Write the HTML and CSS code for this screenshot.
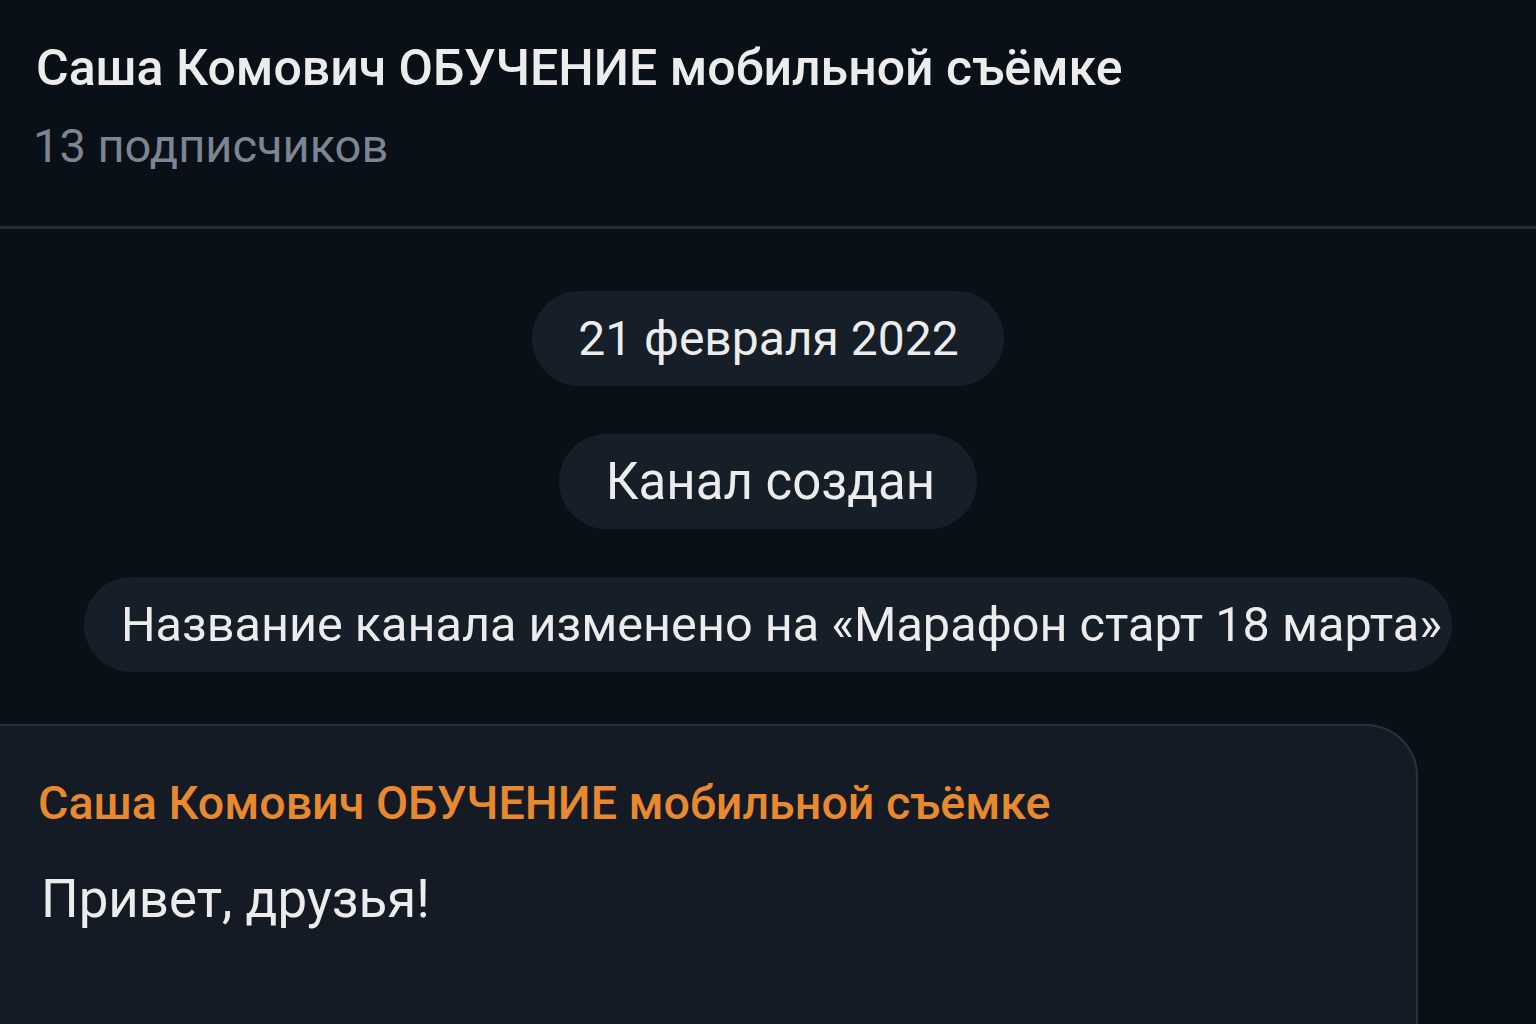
FILE: index.html
```html
<!DOCTYPE html>
<html lang="ru">
<head>
<meta charset="utf-8">
<title>Канал</title>
<link rel="stylesheet" href="styles.css">
</head>
<body>
<header class="chat-header">
  <h1 class="chat-title">Саша Комович ОБУЧЕНИЕ мобильной съёмке</h1>
  <div class="chat-subtitle">13 подписчиков</div>
</header>
<main class="feed">
  <div class="service-pill pill-date">21 февраля 2022</div>
  <div class="service-pill pill-created">Канал создан</div>
  <div class="service-pill pill-renamed">Название канала изменено на «Марафон старт 18 марта»</div>
  <article class="message">
    <div class="message-author">Саша Комович ОБУЧЕНИЕ мобильной съёмке</div>
    <div class="message-text">Привет, друзья!</div>
  </article>
</main>
</body>
</html>
```
FILE: styles.css
```css
html, body {
  margin: 0;
  padding: 0;
  height: 100%;
  overflow: hidden;
}
body {
  background: #0a1018;
  font-family: Roboto, "Noto Sans", sans-serif;
  color: #ececec;
}
.chat-header {
  height: 229px;
  box-sizing: border-box;
  padding: 38px 36px 0 36px;
  border-bottom: 3px solid #262c34;
}
.chat-title {
  margin: 0;
  font-size: 50px;
  font-weight: 500;
  line-height: 60px;
  color: #ececec;
}
.chat-subtitle {
  margin-top: 20px;
  margin-left: -3px;
  font-size: 47px;
  line-height: 56px;
  color: #7c8591;
}
.feed {
  display: flex;
  flex-direction: column;
  align-items: center;
  padding-top: 62px;
}
.service-pill {
  background: #161e27;
  color: #ececec;
  border-radius: 48px;
  height: 95px;
  display: flex;
  align-items: center;
  box-sizing: border-box;
  font-size: 48px;
  white-space: nowrap;
}
.pill-date {
  padding: 0 45px 0 46px;
}
.pill-created {
  margin-top: 48px;
  padding: 0 42px 0 47px;
  font-size: 51px;
}
.pill-renamed {
  margin-top: 48px;
  padding: 0 10px 0 37px;
  font-size: 48.6px;
}
.message {
  align-self: flex-start;
  margin-top: 52px;
  width: 1418px;
  height: 320px;
  box-sizing: border-box;
  background: #141b24;
  border: 2px solid #2b3139;
  border-left: none;
  border-radius: 0 52px 0 0;
  padding: 48px 0 0 38px;
}
.message-author {
  color: #e8892f;
  font-size: 46.6px;
  font-weight: 500;
  line-height: 58px;
}
.message-text {
  margin-top: 36px;
  margin-left: 3px;
  font-size: 52.8px;
  line-height: 62px;
  color: #ececec;
}
```
